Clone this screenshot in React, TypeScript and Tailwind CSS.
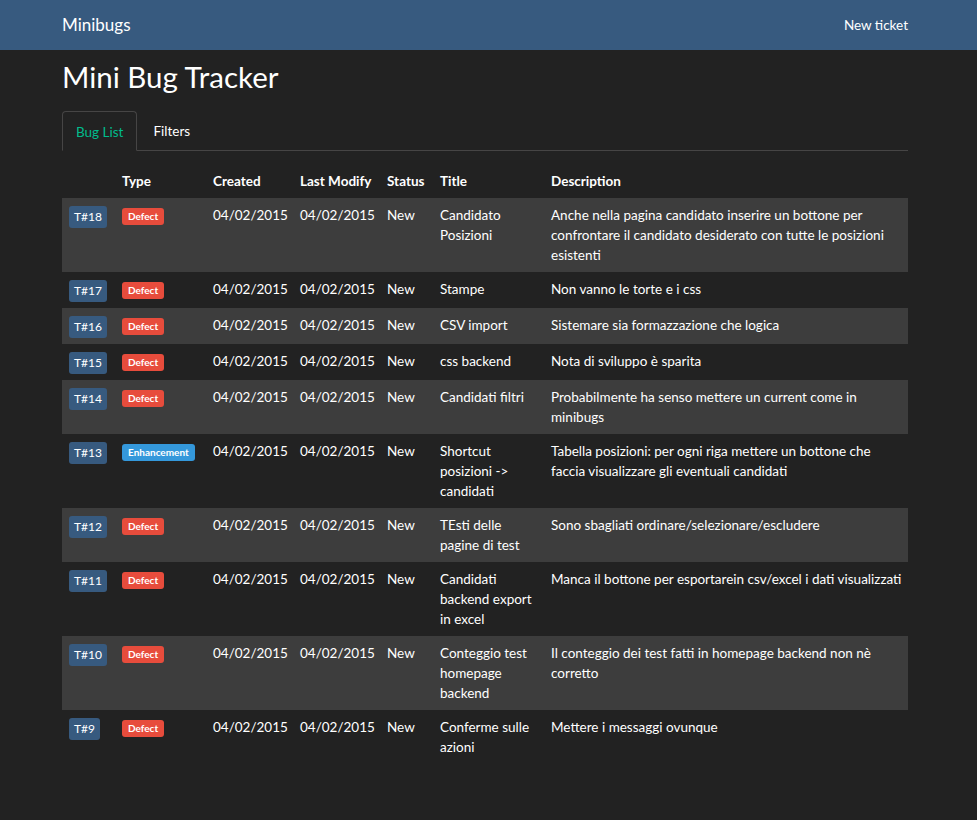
const bugs = [
  { id: 18, type: 'Defect', title: 'Candidato Posizioni', desc: 'Anche nella pagina candidato inserire un bottone per confrontare il candidato desiderato con tutte le posizioni esistenti' },
  { id: 17, type: 'Defect', title: 'Stampe', desc: 'Non vanno le torte e i css' },
  { id: 16, type: 'Defect', title: 'CSV import', desc: 'Sistemare sia formazzazione che logica' },
  { id: 15, type: 'Defect', title: 'css backend', desc: 'Nota di sviluppo è sparita' },
  { id: 14, type: 'Defect', title: 'Candidati filtri', desc: 'Probabilmente ha senso mettere un current come in minibugs' },
  { id: 13, type: 'Enhancement', title: 'Shortcut posizioni -> candidati', desc: 'Tabella posizioni: per ogni riga mettere un bottone che faccia visualizzare gli eventuali candidati' },
  { id: 12, type: 'Defect', title: 'TEsti delle pagine di test', desc: 'Sono sbagliati ordinare/selezionare/escludere' },
  { id: 11, type: 'Defect', title: 'Candidati backend export in excel', desc: 'Manca il bottone per esportarein csv/excel i dati visualizzati' },
  { id: 10, type: 'Defect', title: 'Conteggio test homepage backend', desc: 'Il conteggio dei test fatti in homepage backend non nè corretto' },
  { id: 9, type: 'Defect', title: 'Conferme sulle azioni', desc: 'Mettere i messaggi ovunque' },
];

export default function App() {
  return (
    <div className="min-h-[820px] bg-[#222222] text-white font-['Lato',sans-serif] text-[13.5px] leading-[20px]">
      <nav className="h-[50px] bg-[#375a7f]">
        <div className="ml-[62px] w-[846px] h-full flex items-center justify-between">
          <span className="text-[17px]">Minibugs</span>
          <span className="text-[13.5px]">New ticket</span>
        </div>
      </nav>

      <div className="ml-[62px] w-[846px]">
        <h1 className="text-[29.5px] leading-[33px] mt-[10px] mb-[18px]">Mini Bug Tracker</h1>

        <div className="flex border-b border-[#464545] h-[40px]">
          <div className="px-[13px] pt-[10px] border border-[#464545] border-b-[#222222] rounded-t-[4px] -mb-px bg-[#222222] text-[#00bc8c]">
            Bug List
          </div>
          <div className="px-[16px] pt-[10px]">Filters</div>
        </div>

        <table className="w-[846px] table-fixed mt-[9px] border-collapse">
          <colgroup>
            <col className="w-[52px]" />
            <col className="w-[91px]" />
            <col className="w-[87px]" />
            <col className="w-[87px]" />
            <col className="w-[53px]" />
            <col className="w-[111px]" />
            <col />
          </colgroup>
          <thead>
            <tr className="border-b-2 border-[#222222] text-left font-bold whitespace-nowrap">
              <th className="px-2 pt-[11px] pb-[5px]"></th>
              <th className="px-2 pt-[11px] pb-[5px]">Type</th>
              <th className="px-2 pt-[11px] pb-[5px]">Created</th>
              <th className="px-2 pt-[11px] pb-[5px]">Last Modify</th>
              <th className="px-2 pt-[11px] pb-[5px]">Status</th>
              <th className="px-2 pt-[11px] pb-[5px]">Title</th>
              <th className="px-2 pt-[11px] pb-[5px]">Description</th>
            </tr>
          </thead>
          <tbody>
            {bugs.map((b, i) => (
              <tr key={b.id} className={i % 2 === 0 ? 'bg-[#3d3d3d] align-top' : 'align-top'}>
                <td className="pt-2 pb-[6px] pl-[7px] pr-0">
                  <span className="block w-fit bg-[#375a7f] rounded-[3px] px-[5px] text-[12px] leading-[22px] h-[22px]">T#{b.id}</span>
                </td>
                <td className="pt-2 pb-[6px] pl-2 pr-0">
                  <span
                    className={
                      (b.type === 'Defect' ? 'bg-[#e74c3c]' : 'bg-[#3498db]') +
                      ' block w-fit rounded-[3px] px-[6px] text-[10px] font-bold leading-[17px] h-[17px] mt-[2px]'
                    }
                  >
                    {b.type}
                  </span>
                </td>
                <td className="py-[7px] pl-2 pr-0">04/02/2015</td>
                <td className="py-[7px] pl-2 pr-0">04/02/2015</td>
                <td className="py-[7px] pl-2 pr-0">New</td>
                <td className="py-[7px] pl-2 pr-1">{b.title}</td>
                <td className="py-[7px] pl-2 pr-1">{b.desc}</td>
              </tr>
            ))}
          </tbody>
        </table>
      </div>
    </div>
  );
}
